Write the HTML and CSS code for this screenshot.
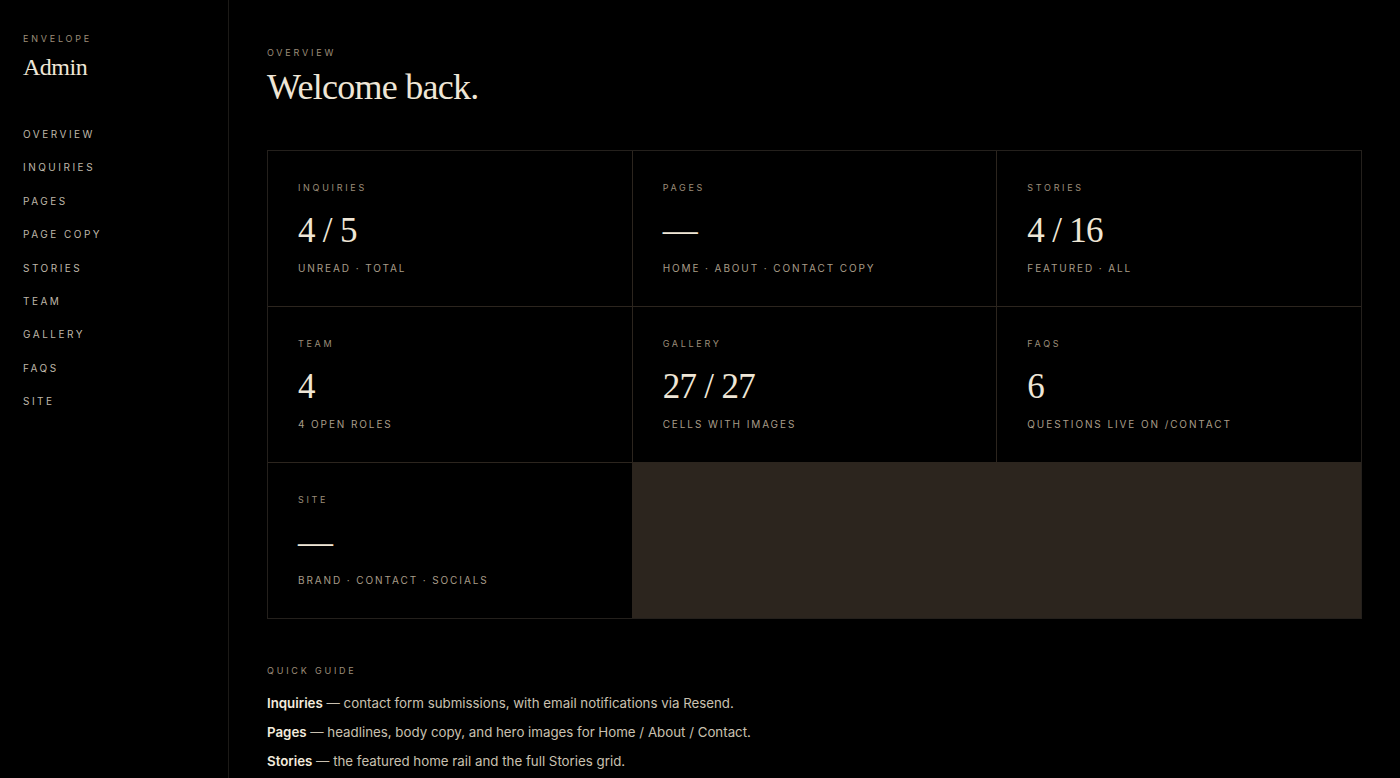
FILE: index.html
```html
<!DOCTYPE html>
<html lang="en">
<head>
    <meta charset="UTF-8">
    <meta name="viewport" content="width=device-width, initial-scale=1.0">
    <title>Envelope Admin</title>
    <link rel="stylesheet" href="styles.css">
</head>
<body>

<div class="layout">
    <aside class="sidebar">
        <div class="brand">
            <div class="eyebrow">Envelope</div>
            <div class="brand-name">Admin</div>
        </div>
        <nav class="nav">
            <a href="#">Overview</a>
            <a href="#">Inquiries</a>
            <a href="#">Pages</a>
            <a href="#">Page Copy</a>
            <a href="#">Stories</a>
            <a href="#">Team</a>
            <a href="#">Gallery</a>
            <a href="#">FAQs</a>
            <a href="#">Site</a>
        </nav>
    </aside>

    <main class="main">
        <div class="eyebrow">Overview</div>
        <h1>Welcome back.</h1>

        <div class="stats">
            <div class="stat">
                <div class="stat-label">Inquiries</div>
                <div class="stat-value">4 / 5</div>
                <div class="stat-note">Unread · Total</div>
            </div>
            <div class="stat">
                <div class="stat-label">Pages</div>
                <div class="stat-value">—</div>
                <div class="stat-note">Home · About · Contact copy</div>
            </div>
            <div class="stat">
                <div class="stat-label">Stories</div>
                <div class="stat-value">4 / 16</div>
                <div class="stat-note">Featured · All</div>
            </div>
            <div class="stat">
                <div class="stat-label">Team</div>
                <div class="stat-value">4</div>
                <div class="stat-note">4 open roles</div>
            </div>
            <div class="stat">
                <div class="stat-label">Gallery</div>
                <div class="stat-value">27 / 27</div>
                <div class="stat-note">Cells with images</div>
            </div>
            <div class="stat">
                <div class="stat-label">FAQs</div>
                <div class="stat-value">6</div>
                <div class="stat-note">Questions live on /contact</div>
            </div>
            <div class="stat">
                <div class="stat-label">Site</div>
                <div class="stat-value">—</div>
                <div class="stat-note">Brand · Contact · Socials</div>
            </div>
        </div>

        <section class="guide">
            <div class="eyebrow">Quick guide</div>
            <p><strong>Inquiries</strong> — contact form submissions, with email notifications via Resend.</p>
            <p><strong>Pages</strong> — headlines, body copy, and hero images for Home / About / Contact.</p>
            <p><strong>Stories</strong> — the featured home rail and the full Stories grid.</p>
        </section>
    </main>
</div>

</body>
</html>
```

FILE: styles.css
```css
body {
    font-family: "Inter", "Noto Sans", sans-serif;
    background-color: #000;
    color: #d6cdbd;
    margin: 0;
    padding: 0;
}
.layout {
    display: flex;
    min-height: 100vh;
}
.sidebar {
    width: 229px;
    flex-shrink: 0;
    border-right: 1px solid #1c1a17;
    padding: 33px 0 0 23px;
    box-sizing: border-box;
}
.eyebrow {
    font-size: 9px;
    letter-spacing: 0.31em;
    text-transform: uppercase;
    color: #9c8d79;
}
.brand-name {
    font-family: "Liberation Serif", "DejaVu Serif", serif;
    font-size: 24px;
    color: #efe6d6;
    margin-top: 10px;
    letter-spacing: -0.02em;
}
.nav {
    display: flex;
    flex-direction: column;
    gap: 19.4px;
    margin-top: 46px;
}
.nav a {
    font-size: 10px;
    letter-spacing: 0.25em;
    text-transform: uppercase;
    color: #bfb7a9;
    text-decoration: none;
    line-height: 14px;
}
.main {
    flex: 1;
    padding: 47px 38px 0 38px;
}
h1 {
    font-family: "Liberation Serif", "DejaVu Serif", serif;
    font-weight: normal;
    font-size: 36px;
    color: #efe6d6;
    margin: 8px 0 0;
    letter-spacing: -0.02em;
}
.stats {
    display: grid;
    grid-template-columns: repeat(3, 1fr);
    gap: 1px;
    background-color: #2c251e;
    border: 1px solid #24201c;
    margin-top: 42px;
}
.stat {
    background-color: #000;
    height: 155px;
    padding: 31px 30px 0;
    box-sizing: border-box;
}
.stat-label {
    font-size: 9px;
    letter-spacing: 0.3em;
    text-transform: uppercase;
    color: #9c8d79;
}
.stat-value {
    font-family: "Liberation Serif", "DejaVu Serif", serif;
    font-size: 35px;
    color: #efe6d6;
    line-height: 44px;
    margin-top: 16px;
    letter-spacing: -0.02em;
}
.stat-note {
    font-size: 10px;
    letter-spacing: 0.19em;
    text-transform: uppercase;
    color: #a89c88;
    margin-top: 9px;
}
.guide {
    margin-top: 46px;
}
.guide .eyebrow {
    margin-bottom: 18px;
}
.guide p {
    font-size: 13.3px;
    color: #c9c0b0;
    margin: 0 0 11px;
    line-height: 18px;
}
.guide strong {
    color: #f3ebdd;
    font-weight: 600;
}
```
